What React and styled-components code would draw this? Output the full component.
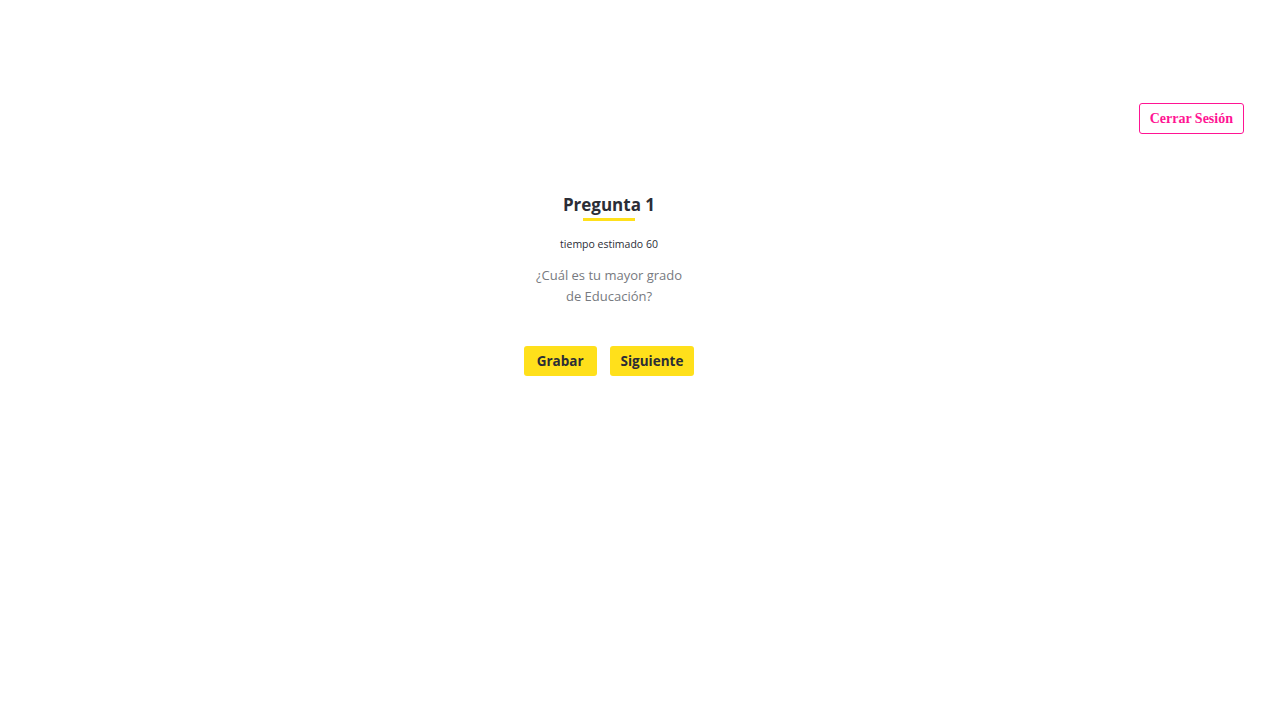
import React from "react";
import styled, { createGlobalStyle } from "styled-components";

const Global = createGlobalStyle`
  html, body { margin: 0; padding: 0; background: #fff; }
  body { font-family: "Open Sans", "Noto Sans", sans-serif; }
`;

const Page = styled.div`
  width: 1280px;
  min-height: 720px;
  display: flex;
  flex-direction: column;
`;

const Header = styled.header`
  display: flex;
  justify-content: flex-end;
  padding: 103px 36px 0 0;
`;

const LogoutButton = styled.button`
  height: 31px;
  padding: 0 10px;
  border: 1px solid #ff1493;
  border-radius: 3px;
  background: #fff;
  color: #ff1493;
  font-family: "Liberation Serif", "DejaVu Serif", serif;
  font-weight: bold;
  font-size: 14px;
  cursor: pointer;
`;

const Main = styled.main`
  width: 1218px;
  display: flex;
  flex-direction: column;
  align-items: center;
  padding-top: 59px;
`;

const Title = styled.h1`
  margin: 0;
  font-size: 17px;
  font-weight: 700;
  line-height: 24px;
  color: #2b2d36;
`;

const Underline = styled.div`
  width: 52px;
  height: 3px;
  background: #ffe01b;
  margin-top: 1px;
`;

const Time = styled.p`
  margin: 15px 0 0;
  font-size: 10.5px;
  line-height: 16px;
  color: #2b2d36;
`;

const Question = styled.p`
  margin: 13px 0 0;
  width: 150px;
  text-align: center;
  font-size: 13px;
  line-height: 21px;
  color: #777a80;
`;

const Actions = styled.div`
  display: flex;
  gap: 13px;
  margin-top: 39px;
`;

const ActionButton = styled.button`
  height: 30px;
  padding: 0 ${(p) => p.$px || 11}px;
  border: none;
  border-radius: 3px;
  background: #ffe01b;
  color: #2b2d36;
  font-family: "Open Sans", sans-serif;
  font-weight: 700;
  font-size: 13.5px;
  cursor: pointer;
`;

export default function App() {
  return (
    <Page>
      <Global />
      <Header>
        <LogoutButton>Cerrar Sesión</LogoutButton>
      </Header>
      <Main>
        <Title>Pregunta 1</Title>
        <Underline />
        <Time>tiempo estimado 60</Time>
        <Question>¿Cuál es tu mayor grado de Educación?</Question>
        <Actions>
          <ActionButton $px={13}>Grabar</ActionButton>
          <ActionButton $px={11}>Siguiente</ActionButton>
        </Actions>
      </Main>
    </Page>
  );
}
